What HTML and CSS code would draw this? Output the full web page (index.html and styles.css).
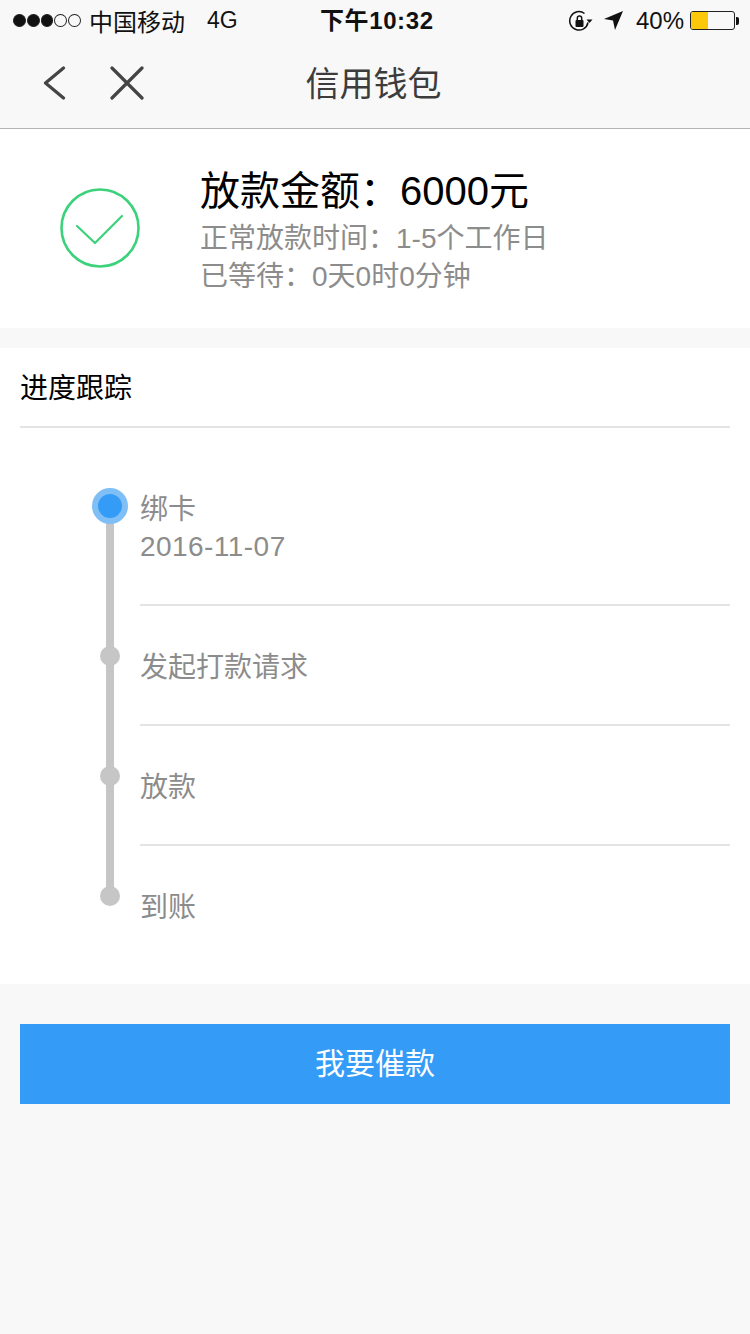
FILE: index.html
```html
<!DOCTYPE html>
<html lang="zh-CN">
<head>
<meta charset="utf-8">
<title>信用钱包</title>
<link rel="stylesheet" href="styles.css">
</head>
<body>
<header class="top">
  <div class="status">
    <div class="status-left">
      <span class="signal"><i class="on"></i><i class="on"></i><i class="on"></i><i></i><i></i></span>
      <span class="carrier">中国移动</span>
      <span class="net">4G</span>
    </div>
    <div class="clock">下午10:32</div>
    <div class="status-right">
      <svg class="lock" width="24" height="22" viewBox="0 0 24 22"><path d="M19 12.500A9.200 9.200 0 1 1 15.500 3.500" fill="none" stroke="#111" stroke-width="1.500"/><path d="M17.500 9.500h6l-3 3.500z" fill="#111"/><rect x="6.500" y="10" width="8" height="7" rx="1" fill="#111"/><path d="M8.300 10V8.200a2.200 2.200 0 0 1 4.400 0V10" fill="none" stroke="#111" stroke-width="1.500"/></svg>
      <svg class="arrow" width="19" height="19" viewBox="0 0 19 19"><path d="M19 0 0 8l9 1.500L11 19z" fill="#111"/></svg>
      <span class="pct">40%</span>
      <span class="battery"><span class="battery-fill"></span></span>
      <span class="battery-tip"></span>
    </div>
  </div>
  <nav class="nav">
    <div class="nav-icons">
      <svg width="24" height="34" viewBox="0 0 24 34"><path d="M21.500 2 3.500 17l18 15" fill="none" stroke="#444" stroke-width="3.200" stroke-linecap="round" stroke-linejoin="round"/></svg>
      <svg width="34" height="34" viewBox="0 0 34 34"><path d="M2 2l30 30M32 2 2 32" fill="none" stroke="#444" stroke-width="3.200" stroke-linecap="round"/></svg>
    </div>
    <h1 class="nav-title">信用钱包</h1>
  </nav>
</header>

<section class="summary">
  <div class="check">
    <svg width="80" height="80" viewBox="0 0 80 80"><circle cx="40" cy="40" r="38.500" fill="none" stroke="#3bd27b" stroke-width="2.600"/><path d="M17 38l18 17 27-27" fill="none" stroke="#3bd27b" stroke-width="2.200" stroke-linecap="round" stroke-linejoin="round"/></svg>
  </div>
  <div class="summary-text">
    <div class="amount">放款金额：6000元</div>
    <div class="note">正常放款时间：1-5个工作日</div>
    <div class="note">已等待：0天0时0分钟</div>
  </div>
</section>

<section class="progress">
  <h2 class="progress-title">进度跟踪</h2>
  <ol class="timeline">
    <li class="step current">
      <div class="step-body"><div>绑卡</div><div class="date">2016-11-07</div></div>
    </li>
    <li class="step"><div class="step-body"><div>发起打款请求</div></div></li>
    <li class="step"><div class="step-body"><div>放款</div></div></li>
    <li class="step last"><div class="step-body"><div>到账</div></div></li>
  </ol>
</section>

<div class="action"><button class="urge">我要催款</button></div>
</body>
</html>
```
FILE: styles.css
```css
*, *::before, *::after { box-sizing: border-box; }
html, body { margin: 0; padding: 0; }
body {
  width: 750px;
  height: 1334px;
  overflow: hidden;
  background: #f8f8f8;
  font-family: "Liberation Sans", "Noto Sans CJK SC", sans-serif;
}
.top { height: 129px; background: #f8f8f8; border-bottom: 1px solid #b4b4b4; }
.status {
  height: 40px;
  display: flex;
  align-items: center;
  justify-content: space-between;
  padding: 1px 11px 0 13px;
  position: relative;
  color: #111;
  font-size: 24px;
}
.status-left { display: flex; align-items: center; }
.signal { display: flex; gap: 1px; width: 68px; }
.signal i { width: 13px; height: 13px; border-radius: 50%; border: 1px solid #222; display: block; }
.signal i.on { background: #111; }
.carrier { margin-left: 8px; }
.net { margin-left: 22px; font-size: 23px; }
.clock {
  position: absolute;
  left: 320px;
  top: 0;
  line-height: 41px;
  font-weight: 700;
  font-size: 24px;
  letter-spacing: 0.6px;
}
.status-right { display: flex; align-items: center; }
.lock { margin-right: 11px; }
.arrow { margin-right: 13px; }
.pct { font-size: 24px; margin-right: 6px; }
.battery {
  width: 45px;
  height: 19px;
  border: 1px solid #222;
  border-radius: 3px;
  display: block;
  overflow: hidden;
}
.battery-fill { display: block; width: 17px; height: 100%; background: #fdc80a; }
.battery-tip { width: 3px; height: 8px; background: #111; margin-left: 1px; border-radius: 0 2px 2px 0; }
.nav { height: 88px; position: relative; display: flex; align-items: center; justify-content: center; padding-right: 3px; }
.nav-icons { position: absolute; left: 42px; top: 26px; display: flex; gap: 44px; }
.nav-title { margin: 0; font-weight: 400; font-size: 34px; line-height: 88px; color: #3c3c3c; }

.summary { height: 199px; background: #fff; display: flex; align-items: center; padding: 0 0 2px 60px; }
.check { width: 80px; height: 80px; margin-right: 60px; }
.summary-text { display: flex; flex-direction: column; padding-top: 4px; }
.amount { font-size: 40px; line-height: 54px; margin-bottom: 2px; color: #000; }
.note { font-size: 28px; line-height: 38px; color: #8c8c8c; }

.progress { margin-top: 20px; height: 636px; background: #fff; padding: 0 20px; }
.progress-title {
  margin: 0;
  height: 80px;
  padding-top: 2px;
  font-weight: 400;
  font-size: 28px;
  line-height: 78px;
  color: #000;
  border-bottom: 2px solid #e4e4e4;
}
.timeline { list-style: none; margin: 0; padding: 58px 0 0 120px; }
.step {
  height: 120px;
  position: relative;
  font-size: 28px;
  line-height: 38px;
  color: #8c8c8c;
}
.step-body { height: 120px; padding-top: 43px; border-bottom: 2px solid #e4e4e4; }
.current .step-body { padding-top: 5px; }
.date { letter-spacing: 0.45px; margin-top: -1px; }
.step.last .step-body { border-bottom: 0; }
.step::before {
  content: "";
  position: absolute;
  left: -40px;
  top: 40px;
  width: 20px;
  height: 20px;
  border-radius: 50%;
  background: #c6c6c6;
  z-index: 1;
}
.step.current::before { top: 2px; left: -48px; width: 36px; height: 36px; background: #349cf7; border: 6px solid #7fbff6; }
.step::after {
  content: "";
  position: absolute;
  left: -34px;
  top: 50px;
  width: 8px;
  height: 120px;
  background: #c6c6c6;
}
.step.current::after { top: 30px; height: 140px; }
.step.last::after { display: none; }

.action { padding: 40px 20px 0; }
.urge {
  display: block;
  width: 100%;
  height: 80px;
  border: 0;
  padding: 0 0 6px;
  background: #349cf7;
  color: #fff;
  font-family: inherit;
  font-size: 30px;
}
```
